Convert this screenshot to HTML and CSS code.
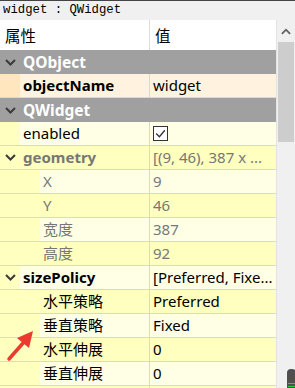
FILE: index.html
```html
<!DOCTYPE html>
<html lang="zh-CN">
<head>
    <meta charset="UTF-8">
    <title>Property Editor</title>
    <link rel="stylesheet" href="styles.css">
</head>
<body>
    <div class="editor">
        <div class="title-bar">widget : QWidget</div>
        <div class="main">
            <div class="tree">
                <div class="header">
                    <div class="col-name">属性</div>
                    <div class="col-value">值</div>
                </div>

                <div class="group">
                    <span class="branch"><svg class="chevron" viewBox="0 0 11 7"><polyline points="1,1 5.5,5.5 10,1"/></svg></span>
                    <span class="group-label">QObject</span>
                </div>
                <div class="row peach light">
                    <div class="name"><span class="branch"></span><span class="label bold">objectName</span></div>
                    <div class="value">widget</div>
                </div>

                <div class="group">
                    <span class="branch"><svg class="chevron" viewBox="0 0 11 7"><polyline points="1,1 5.5,5.5 10,1"/></svg></span>
                    <span class="group-label">QWidget</span>
                </div>
                <div class="row yellow light">
                    <div class="name"><span class="branch"></span><span class="label">enabled</span></div>
                    <div class="value"><span class="checkbox"><svg viewBox="0 0 12 12"><polyline points="2,6 5,9 10,3"/></svg></span></div>
                </div>
                <div class="row yellow muted">
                    <div class="name"><span class="branch"><svg class="chevron" viewBox="0 0 11 7"><polyline points="1,1 5.5,5.5 10,1"/></svg></span><span class="label bold">geometry</span></div>
                    <div class="value">[(9, 46), 387 x ...</div>
                </div>
                <div class="row yellow light muted">
                    <div class="name"><span class="branch child"></span><span class="label">X</span></div>
                    <div class="value">9</div>
                </div>
                <div class="row yellow muted">
                    <div class="name"><span class="branch child"></span><span class="label">Y</span></div>
                    <div class="value">46</div>
                </div>
                <div class="row yellow light muted">
                    <div class="name"><span class="branch child"></span><span class="label">宽度</span></div>
                    <div class="value">387</div>
                </div>
                <div class="row yellow muted">
                    <div class="name"><span class="branch child"></span><span class="label">高度</span></div>
                    <div class="value">92</div>
                </div>
                <div class="row yellow light">
                    <div class="name"><span class="branch"><svg class="chevron" viewBox="0 0 11 7"><polyline points="1,1 5.5,5.5 10,1"/></svg></span><span class="label bold">sizePolicy</span></div>
                    <div class="value">[Preferred, Fixe...</div>
                </div>
                <div class="row yellow">
                    <div class="name"><span class="branch child"></span><span class="label">水平策略</span></div>
                    <div class="value">Preferred</div>
                </div>
                <div class="row yellow light">
                    <div class="name"><span class="branch child"></span><span class="label">垂直策略</span></div>
                    <div class="value">Fixed</div>
                </div>
                <div class="row yellow">
                    <div class="name"><span class="branch child"></span><span class="label">水平伸展</span></div>
                    <div class="value">0</div>
                </div>
                <div class="row yellow light">
                    <div class="name"><span class="branch child"></span><span class="label">垂直伸展</span></div>
                    <div class="value">0</div>
                </div>
                <div class="row yellow">
                    <div class="name"><span class="branch"></span><span class="label"></span></div>
                    <div class="value"></div>
                </div>
            </div>
            <div class="scrollbar">
                <div class="scroll-up"><svg viewBox="0 0 11 7"><polyline points="1,6 5.5,1.5 10,6"/></svg></div>
                <div class="thumb"></div>
            </div>
        </div>

        <!-- annotation arrow drawn over the tree -->
        <svg class="arrow" viewBox="0 0 40 40">
            <line x1="3" y1="31" x2="18" y2="14"/>
            <polygon points="27,3 23,20 11,10"/>
        </svg>
        <div class="dock-widget"><span></span><span></span></div>
    </div>
</body>
</html>
```

FILE: styles.css
```css
body {
    margin: 0;
    font-family: "Noto Sans", "Noto Sans CJK SC", sans-serif;
    font-size: 15px;
    color: #000;
    overflow: hidden;
}
.editor {
    position: relative;
    width: 295px;
    height: 388px;
    overflow: hidden;
    background-color: #f0f0f0;
}
.title-bar {
    height: 19px;
    border-top: 1px solid #444;
    padding-left: 3px;
    font-family: "Liberation Mono", monospace;
    font-size: 12.3px;
    line-height: 19px;
    background-color: #f0f0f0;
}
.main {
    display: flex;
    height: 368px;
}
.tree {
    width: 276px;
    border-right: 1px solid #e3e3e3;
    overflow: hidden;
}
.header {
    display: flex;
    height: 30px;
    line-height: 30px;
    background-color: #fff;
    font-family: "Noto Sans CJK SC", sans-serif;
    font-size: 15.5px;
}
.col-name {
    width: 144px;
    padding-left: 5px;
    border-right: 1px solid #dcdcdc;
}
.col-value {
    padding-left: 5px;
}
.group {
    display: flex;
    align-items: center;
    height: 24px;
    background-color: #a0a0a0;
    color: #fff;
    font-weight: bold;
    font-size: 15.5px;
}
.branch {
    display: flex;
    align-items: center;
    justify-content: center;
    width: 20px;
    height: 100%;
    flex-shrink: 0;
}
.branch.child {
    width: 40px;
}
.chevron {
    width: 11px;
    height: 7px;
    fill: none;
    stroke: #3a3a3a;
    stroke-width: 2;
}
.group-label {
    padding-left: 3px;
}
.row {
    display: flex;
    height: 23px;
    line-height: 23px;
    border-bottom: 1px solid #d8d8d8;
}
.name {
    display: flex;
    width: 149px;
    border-right: 1px solid #d8d8d8;
    font-family: "Noto Sans", "Noto Sans CJK SC", sans-serif;
}
.label {
    padding-left: 3px;
    flex: 1;
    white-space: nowrap;
}
.bold {
    font-weight: bold;
}
.value {
    flex: 1;
    padding-left: 3px;
    white-space: nowrap;
    overflow: hidden;
}
.muted {
    color: #777;
}
.yellow {
    background-color: #ffffbf;
}
.yellow.light .label,
.yellow.light .value {
    background-color: #ffffe6;
}
.peach {
    background-color: #ffe6bf;
}
.peach.light .label,
.peach.light .value {
    background-color: #fff2de;
}
.checkbox {
    display: inline-block;
    width: 13px;
    height: 13px;
    margin-top: 4px;
    border: 1px solid #333;
    background-color: #fff;
    vertical-align: top;
}
.checkbox svg {
    display: block;
    width: 13px;
    height: 13px;
    fill: none;
    stroke: #333;
    stroke-width: 1.2;
}
.scrollbar {
    width: 18px;
    background-color: #f0f0f0;
}
.scroll-up {
    display: flex;
    align-items: center;
    justify-content: center;
    height: 22px;
}
.scroll-up svg {
    width: 10px;
    height: 7px;
    fill: none;
    stroke: #606060;
    stroke-width: 2;
}
.thumb {
    height: 100px;
    margin: 0 1px;
    background-color: #cdcdcd;
}
.arrow {
    position: absolute;
    left: 6px;
    top: 328px;
    width: 40px;
    height: 40px;
}
.arrow line {
    stroke: #ea3b2e;
    stroke-width: 3.5;
    stroke-linecap: round;
}
.arrow polygon {
    fill: #ea3b2e;
}
.dock-widget {
    position: absolute;
    left: 287px;
    top: 369px;
    width: 9px;
    height: 20px;
    border-radius: 4px 4px 0 0;
    background-color: #4f4f4f;
}
.dock-widget span {
    display: block;
    height: 1px;
    margin: 14px 1px 0;
    background-color: #2ecc40;
}
.dock-widget span + span {
    margin-top: 2px;
}
```
